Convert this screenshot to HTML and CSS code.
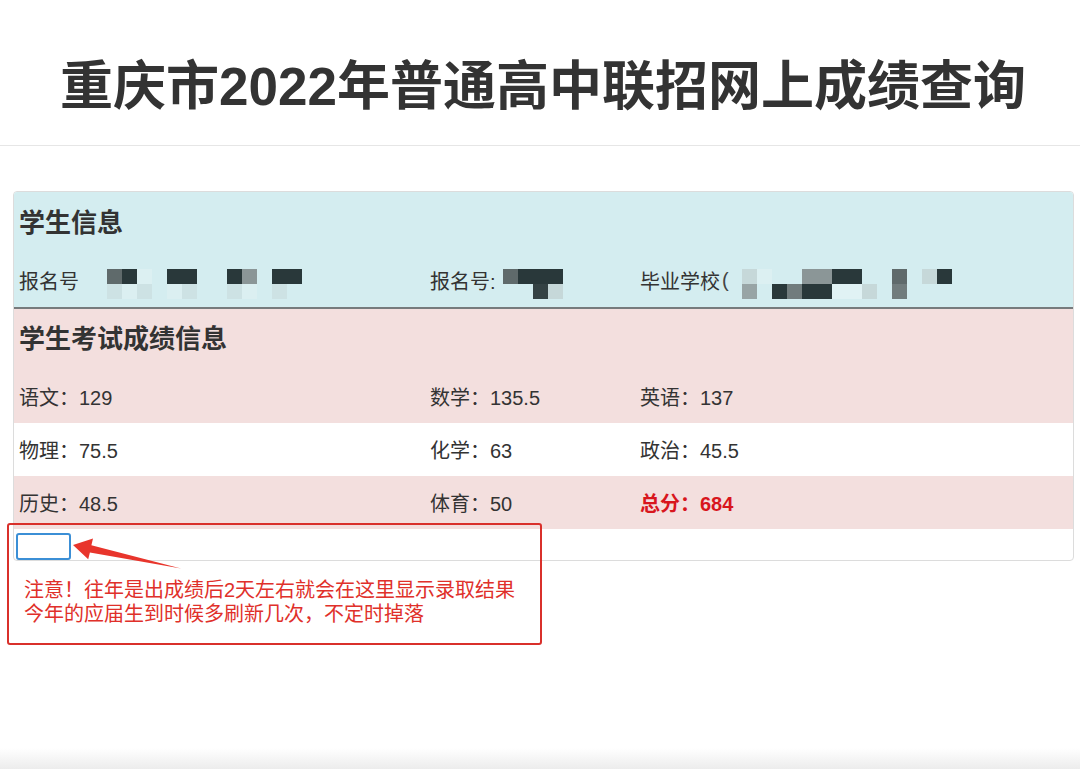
FILE: index.html
```html
<!DOCTYPE html>
<html lang="zh-CN">
<head>
<meta charset="utf-8">
<title>重庆市2022年普通高中联招网上成绩查询</title>
<link rel="stylesheet" href="styles.css">
</head>
<body>
<header class="header">
  <h1>重庆市2022年普通高中联招网上成绩查询</h1>
</header>
<main class="main">
  <div class="panel">
    <section class="info">
      <h2>学生信息</h2>
      <div class="row">
        <div class="cell">报名号<span class="blur b1">
          <i class="g1"></i><i class="d"></i><i class="l0"></i><i></i><i class="d"></i><i class="d"></i><i></i><i></i><i class="d"></i><i class="g2"></i><i></i><i class="d"></i><i class="d"></i>
          <i class="f1"></i><i class="f2"></i><i class="f1"></i><i></i><i class="f2"></i><i class="f1"></i><i></i><i></i><i class="f1"></i><i class="f2"></i><i></i><i class="f1"></i><i></i>
        </span></div>
        <div class="cell">报名号:<span class="blur b2">
          <i class="g1"></i><i class="d"></i><i class="d"></i><i class="d"></i>
          <i></i><i></i><i class="d2"></i><i class="l1"></i>
        </span></div>
        <div class="cell">毕业学校<span class="paren">(</span><span class="blur b3">
          <i class="l1"></i><i class="l0"></i><i></i><i></i><i class="g2"></i><i class="g2"></i><i class="d"></i><i class="d"></i><i></i><i></i><i class="g1"></i><i></i><i class="l1"></i><i class="d"></i>
          <i class="g3"></i><i></i><i class="d"></i><i class="g4"></i><i class="d"></i><i class="d"></i><i class="l2"></i><i class="l2"></i><i class="l1"></i><i></i><i class="g4"></i><i></i><i></i><i></i>
        </span></div>
      </div>
    </section>
    <section class="scores">
      <h2>学生考试成绩信息</h2>
      <div class="row pink">
        <div class="cell">语文：129</div>
        <div class="cell">数学：135.5</div>
        <div class="cell">英语：137</div>
      </div>
      <div class="row">
        <div class="cell">物理：75.5</div>
        <div class="cell">化学：63</div>
        <div class="cell">政治：45.5</div>
      </div>
      <div class="row pink">
        <div class="cell">历史：48.5</div>
        <div class="cell">体育：50</div>
        <div class="cell total">总分：684</div>
      </div>
      <div class="result">
        <span class="result-box"></span>
      </div>
    </section>
    <div class="note">
      <p>注意！往年是出成绩后2天左右就会在这里显示录取结果</p>
      <p>今年的应届生到时候多刷新几次，不定时掉落</p>
    </div>
    <svg class="arrow" viewBox="60 530 130 45" width="130" height="45" aria-hidden="true">
      <polygon points="73,545 93,538.5 91.4,545.2 181,568.5 89.9,552.4 88.2,559.2" fill="#e8352c"/>
    </svg>
  </div>
</main>
</body>
</html>
```
FILE: styles.css
```css
html {
  height: 100%;
  background: linear-gradient(to bottom, #ffffff 0, #ffffff 748px, #ececec 769px);
}
body {
  margin: 0;
  min-height: 769px;
  font-family: "Liberation Sans", "Noto Sans CJK SC", sans-serif;
  color: #333;
}
.header {
  box-sizing: border-box;
  height: 146px;
  border-bottom: 1px solid #e6e6e6;
  text-align: center;
}
.header h1 {
  margin: 0;
  padding-top: 55px;
  padding-left: 6px;
  font-size: 53px;
  line-height: 64px;
  font-weight: bold;
  color: #333;
}
.main {
  padding-top: 45px;
}
.panel {
  position: relative;
  margin: 0 6px 0 13px;
  border: 1px solid #dcdcdc;
  border-radius: 4px;
  background: #fff;
}
.info {
  background: #d4edf0;
  border-bottom: 2px solid #777b7d;
  border-radius: 3px 3px 0 0;
}
h2 {
  margin: 0;
  padding-left: 5px;
  font-size: 26px;
  font-weight: bold;
}
.info h2 {
  height: 62px;
  line-height: 62px;
}
.scores h2 {
  height: 61px;
  line-height: 61px;
  background: #f3dfde;
}
.row {
  display: grid;
  grid-template-columns: 411px 210px 1fr;
  align-items: center;
  height: 53px;
  padding-left: 5px;
  font-size: 20px;
}
.pink {
  background: #f3dfde;
}
.cell {
  display: flex;
  align-items: center;
  white-space: nowrap;
}
.total {
  color: #d8161d;
  font-weight: bold;
}
.blur {
  display: inline-grid;
  grid-auto-rows: 15px;
  margin-top: 6px;
}
.blur i {
  display: block;
  width: 15px;
  height: 15px;
}
.b1 {
  grid-template-columns: repeat(13, 15px);
  margin-left: 28px;
}
.b2 {
  grid-template-columns: repeat(4, 15px);
  margin-left: 7px;
}
.b3 {
  grid-template-columns: repeat(14, 15px);
  margin-left: 13px;
}
.paren {
  font-size: 20px;
  margin-left: 2px;
  color: #444;
}
.blur .d { background: #29383a; }
.blur .d2 { background: #344244; }
.blur .g1 { background: #5f6a6b; }
.blur .g2 { background: #8b9697; }
.blur .g3 { background: #98a4a5; }
.blur .g4 { background: #717c7d; }
.blur .l0 { background: #dcf0f2; }
.blur .l1 { background: #c6d8d9; }
.blur .l2 { background: #e0f2f4; }
.blur .f1 { background: #cde2e4; }
.blur .f2 { background: #dbeff1; }
.result {
  box-sizing: border-box;
  height: 31px;
  padding: 4px 0 0 2px;
}
.result-box {
  display: block;
  box-sizing: border-box;
  width: 55px;
  height: 27px;
  border: 2px solid #3b8fd6;
  border-radius: 3px;
  background: #fff;
}
.note {
  position: absolute;
  left: -7px;
  top: 331px;
  box-sizing: border-box;
  width: 535px;
  height: 122px;
  padding: 53px 0 0 15px;
  border: 2px solid #d9302b;
  border-radius: 3px;
  color: #e0302a;
  font-size: 20px;
  line-height: 24px;
  font-family: "Liberation Sans", "Noto Sans CJK SC", sans-serif;
  white-space: nowrap;
}
.note p {
  margin: 0;
}
.arrow {
  position: absolute;
  left: 46px;
  top: 338px;
}
```
